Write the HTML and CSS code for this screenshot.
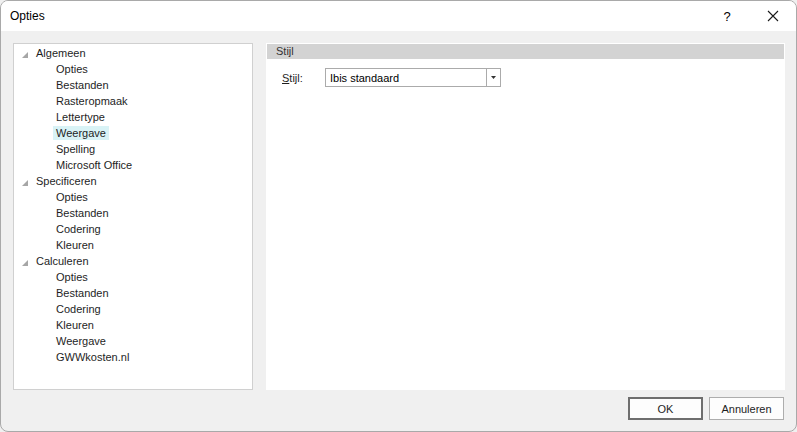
FILE: index.html
```html
<!DOCTYPE html>
<html lang="nl">
<head>
    <meta charset="UTF-8">
    <title>Opties</title>
    <link rel="stylesheet" href="styles.css">
</head>
<body>
    <div class="window">
        <div class="titlebar">
            <div class="title">Opties</div>
            <div class="help">?</div>
            <div class="close">
                <svg width="12" height="12" viewBox="0 0 12 12"><path d="M1 1 L11 11 M11 1 L1 11" stroke="#1a1a1a" stroke-width="1.1" fill="none"/></svg>
            </div>
        </div>

        <div class="content">
            <div class="tree">
                <div class="node"><span class="toggle"><svg width="6" height="6" viewBox="0 0 6 6"><polygon points="6,0 6,6 0,6" fill="#a6a6a6"/></svg></span><span class="label">Algemeen</span></div>
                <div class="node child"><span class="label">Opties</span></div>
                <div class="node child"><span class="label">Bestanden</span></div>
                <div class="node child"><span class="label">Rasteropmaak</span></div>
                <div class="node child"><span class="label">Lettertype</span></div>
                <div class="node child"><span class="label selected">Weergave</span></div>
                <div class="node child"><span class="label">Spelling</span></div>
                <div class="node child"><span class="label">Microsoft Office</span></div>
                <div class="node"><span class="toggle"><svg width="6" height="6" viewBox="0 0 6 6"><polygon points="6,0 6,6 0,6" fill="#a6a6a6"/></svg></span><span class="label">Specificeren</span></div>
                <div class="node child"><span class="label">Opties</span></div>
                <div class="node child"><span class="label">Bestanden</span></div>
                <div class="node child"><span class="label">Codering</span></div>
                <div class="node child"><span class="label">Kleuren</span></div>
                <div class="node"><span class="toggle"><svg width="6" height="6" viewBox="0 0 6 6"><polygon points="6,0 6,6 0,6" fill="#a6a6a6"/></svg></span><span class="label">Calculeren</span></div>
                <div class="node child"><span class="label">Opties</span></div>
                <div class="node child"><span class="label">Bestanden</span></div>
                <div class="node child"><span class="label">Codering</span></div>
                <div class="node child"><span class="label">Kleuren</span></div>
                <div class="node child"><span class="label">Weergave</span></div>
                <div class="node child"><span class="label">GWWkosten.nl</span></div>
            </div>

            <div class="panel">
                <div class="panel-header">Stijl</div>
                <div class="field">
                    <label class="field-label"><u>S</u>tijl:</label>
                    <div class="combo">
                        <span class="combo-text">Ibis standaard</span>
                        <span class="combo-button">
                            <svg width="5" height="3" viewBox="0 0 5 3"><polygon points="0,0 5,0 2.5,3" fill="#333"/></svg>
                        </span>
                    </div>
                </div>
            </div>
        </div>

        <div class="footer">
            <button class="btn default">OK</button>
            <button class="btn">Annuleren</button>
        </div>
    </div>
</body>
</html>
```

FILE: styles.css
```css
body {
    margin: 0;
    font-family: 'Liberation Sans', Arial, sans-serif;
    background: #f0f0f0;
}

.window {
    width: 797px;
    height: 432px;
    box-sizing: border-box;
    border: 1px solid #a9a9a9;
    border-radius: 8px;
    background-color: #f0f0f0;
    overflow: hidden;
    display: flex;
    flex-direction: column;
}

.titlebar {
    height: 30px;
    background-color: #fff;
    display: flex;
    align-items: center;
    padding-left: 9px;
    color: #000;
}

.title {
    font-size: 12px;
    flex: 1;
}

.help {
    font-size: 13px;
    width: 46px;
    text-align: center;
}

.close {
    width: 46px;
    display: flex;
    justify-content: center;
    align-items: center;
}

.content {
    display: flex;
    gap: 13px;
    padding: 12px 11px 0 12px;
}

.tree {
    width: 240px;
    height: 347px;
    box-sizing: border-box;
    background-color: #fff;
    border: 1px solid #d0d0d0;
    padding-top: 1px;
    font-size: 11px;
    color: #1e1e1e;
}

.node {
    height: 16px;
    line-height: 16px;
    display: flex;
    align-items: center;
}

.toggle {
    width: 6px;
    height: 6px;
    margin-left: 8px;
    margin-right: 5px;
    display: flex;
    margin-top: 3px;
}

.node .label {
    padding: 0 3px;
    line-height: 14px;
}

.node.child .label {
    margin-left: 39px;
}

.node .label.selected {
    background-color: #d9f3f6;
}

.panel {
    flex: 1;
    height: 347px;
    box-sizing: border-box;
    background-color: #fff;
    padding: 1px;
}

.panel-header {
    background-color: #d3d3d3;
    height: 15px;
    line-height: 15px;
    padding-left: 9px;
    font-size: 11px;
    color: #333;
}

.field {
    display: flex;
    align-items: center;
    margin-top: 9px;
    padding-left: 15px;
    font-size: 11px;
    color: #1e1e1e;
}

.field-label {
    width: 43px;
}

.combo {
    width: 176px;
    height: 19px;
    box-sizing: border-box;
    border: 1px solid #ababab;
    display: flex;
    align-items: center;
    background-color: #fff;
}

.combo-text {
    flex: 1;
    padding-left: 4px;
    color: #000;
}

.combo-button {
    width: 13px;
    height: 17px;
    border-left: 1px solid #ababab;
    display: flex;
    align-items: center;
    justify-content: center;
}

.footer {
    display: flex;
    justify-content: flex-end;
    gap: 6px;
    padding: 7px 12px 0 0;
}

.btn {
    width: 75px;
    height: 23px;
    box-sizing: border-box;
    background-color: #fdfdfd;
    border: 1px solid #adadad;
    font-family: 'Liberation Sans', Arial, sans-serif;
    font-size: 11px;
    color: #1e1e1e;
    padding: 0;
}

.btn.default {
    border: 2px solid #6e6e6e;
}
```
